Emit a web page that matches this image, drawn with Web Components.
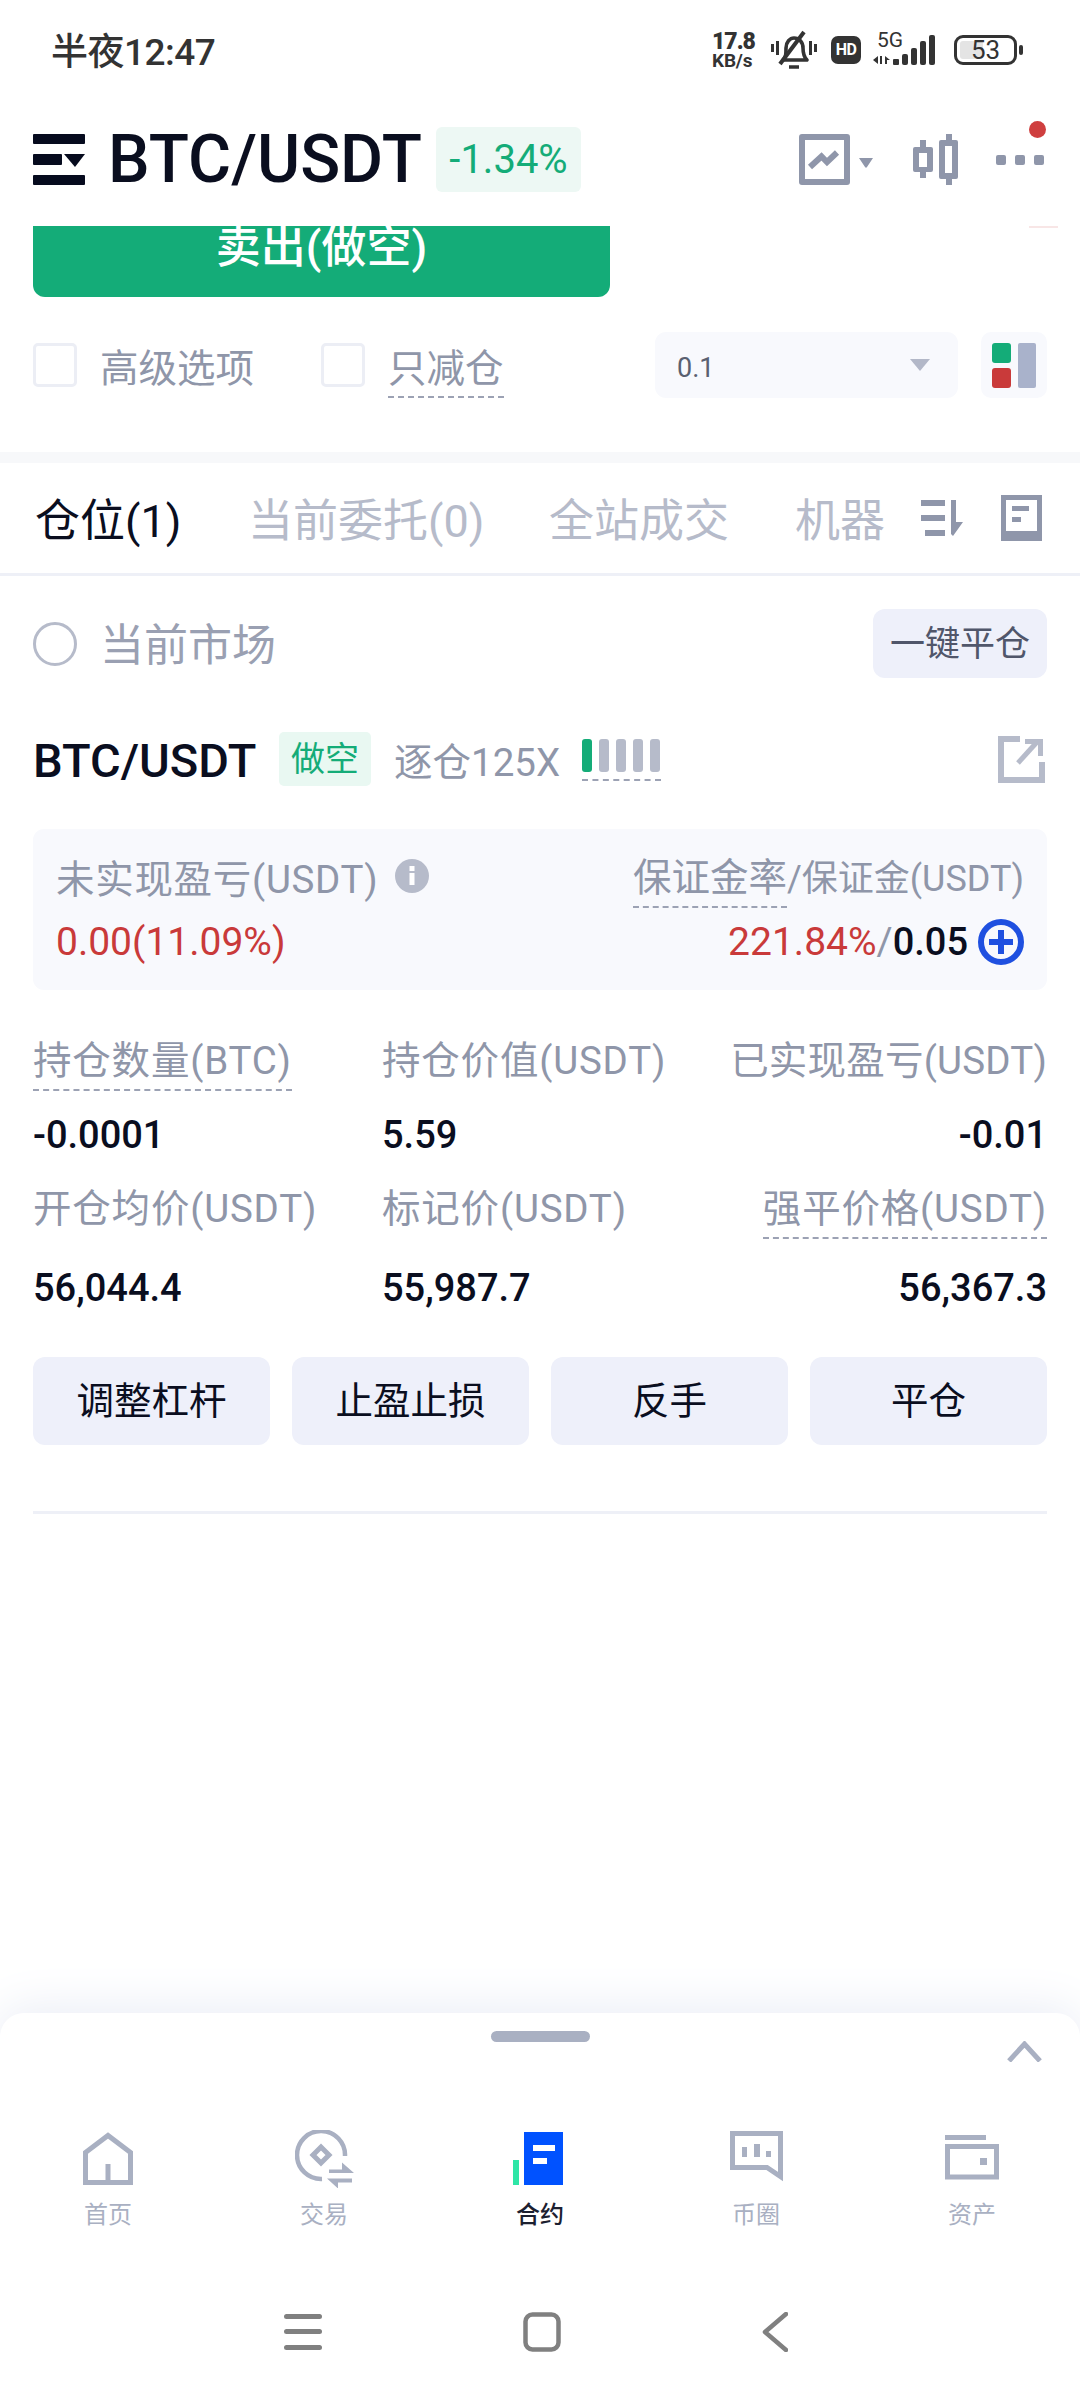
<!doctype html>
<html lang="zh">
<head>
<meta charset="utf-8">
<title>BTC/USDT</title>
<style>
  html, body { margin: 0; padding: 0; background: #fff; }
  body {
    width: 1080px; height: 2400px; overflow: hidden;
    font-family: Roboto, "Noto Sans CJK SC", sans-serif;
    display: flex; flex-direction: column;
  }
  main-scroll { flex: 1; }
</style>
</head>
<body>
<status-bar></status-bar>
<market-header></market-header>
<main-scroll>
  <order-panel></order-panel>
  <position-tabs></position-tabs>
  <position-filter></position-filter>
  <position-card></position-card>
</main-scroll>
<bottom-nav></bottom-nav>
<system-nav></system-nav>

<script>
// Small base class: every element only supplies its own css and markup.
class Bloco extends HTMLElement {
  constructor() {
    super();
    this.attachShadow({ mode: "open" });
  }
  connectedCallback() {
    this.shadowRoot.innerHTML = `<style>${this.estilo()}</style>${this.marcacao()}`;
  }
  estilo() { return ":host{display:block}"; }
  marcacao() { return "<slot></slot>"; }
}

class StatusBar extends Bloco {
  estilo() {
    return `
      :host { display: flex; align-items: center; height: 100px; padding: 0 57px 0 51px; color: #333; box-sizing: border-box; }
      .hora { font-size: 37px; font-weight: 500; letter-spacing: -0.5px; margin-top: -2px; }
      .dir { margin-left: auto; display: flex; align-items: center; height: 50px; }
      .rede { font-size: 19px; line-height: 17px; font-weight: 700; width: 59px; letter-spacing: -0.2px; }
      .rede b { display: block; font-size: 23px; line-height: 20px; letter-spacing: -1px; }
      .hd { width: 30px; height: 28px; background: #333; color: #fff; border-radius: 7px; font: 700 16px/28px Roboto, sans-serif;
            text-align: center; margin: 0 12px 0 14px; letter-spacing: -0.5px; }
      .sinal { width: 68px; height: 36px; position: relative; }
      .sinal span { position: absolute; left: 4px; top: -3px; font-size: 21px; line-height: 22px; }
      .sinal svg { position: absolute; left: 0; top: 0; }
      .bat { margin-left: 13px; width: 63px; height: 30px; border: 3px solid #333; border-radius: 9px; box-sizing: border-box;
             position: relative; font-size: 26px; line-height: 24px; text-align: center; }
      .bat i { position: absolute; left: 3px; top: 3px; bottom: 3px; width: 23px; background: #e4e4e4; border-radius: 3px; }
      .bat span { position: relative; }
      .nub { width: 4px; height: 10px; background: #333; margin-left: 2px; border-radius: 2px; }
    `;
  }
  marcacao() {
    return `
      <div class="hora">半夜12:47</div>
      <div class="dir">
        <div class="rede"><b>17.8</b>KB/s</div>
        <svg width="46" height="42" viewBox="0 0 46 42" fill="none" stroke="#333" stroke-width="3.6">
          <path d="M12 31c3-3 3-6 3-12 0-6 4-10 8-10 5 0 9 4 9 10 0 6 1 9 4 12z" stroke-linejoin="round"/>
          <path d="M33 3 9 35" stroke-width="4"/>
          <path d="M1.500 15v8M6.500 12v14M39.500 12v14M44.500 15v8" stroke-width="3"/>
          <path d="M18 38h10" stroke-width="3.500"/>
        </svg>
        <div class="hd">HD</div>
        <div class="sinal">
          <span>5G</span>
          <svg width="68" height="36" viewBox="0 0 68 36" fill="#333">
            <path d="M0 28l5-4v8zM7 24h2v8H7zM12 24l5 4h-3v4h-2z"/>
            <rect x="20" y="27" width="6" height="6" rx="1"/>
            <rect x="29" y="22" width="6" height="11" rx="2"/>
            <rect x="38" y="16" width="6" height="17" rx="2"/>
            <rect x="47" y="9" width="6" height="24" rx="2"/>
            <rect x="56" y="3" width="6" height="30" rx="2"/>
          </svg>
        </div>
        <div class="bat"><i></i><span>53</span></div>
        <div class="nub"></div>
      </div>
    `;
  }
}

class MarketHeader extends Bloco {
  estilo() {
    return `
      :host { display: flex; align-items: center; height: 126px; padding: 0 35px 7px 33px; box-sizing: border-box; }
      .logo { display: block; }
      h1 { margin: 0 0 0 23px; width: 328px; font-size: 66px; font-weight: 500; color: #0a0e1f; line-height: 70px; white-space: nowrap; }
      .var { width: 145px; height: 65px; background: #edf8f4; border-radius: 6px; color: #14ac78;
             font-size: 40px; line-height: 65px; text-align: center; }
      .acoes { margin-left: auto; display: flex; align-items: center; position: relative; height: 52px; }
      .ponto { position: absolute; right: -1px; top: -13px; width: 17px; height: 17px; border-radius: 50%; background: #cf3f3f; }
    `;
  }
  marcacao() {
    return `
      <svg class="logo" width="52" height="52" viewBox="0 0 52 52" fill="#060b1e">
        <rect width="52" height="10" rx="1"/>
        <rect y="20" width="29" height="11" rx="1"/>
        <path d="M31 20h21L42 33z"/>
        <rect y="41" width="52" height="10" rx="1"/>
      </svg>
      <h1>BTC/USDT</h1>
      <div class="var">-1.34%</div>
      <div class="acoes">
        <svg width="75" height="52" viewBox="0 0 75 52" fill="#8f96aa">
          <path d="M3 0h45a3 3 0 0 1 3 3v45a3 3 0 0 1-3 3H3a3 3 0 0 1-3-3V3a3 3 0 0 1 3-3zM6 6v39h39V6z" fill-rule="evenodd"/>
          <path d="M11 33 22.500 22.500 28 28l10-9.500" fill="none" stroke="#8f96aa" stroke-width="6"/>
          <path d="M60 24h14l-6 9a1.200 1.200 0 0 1-2 0z"/>
        </svg>
        <svg style="margin-left:38px" width="46" height="52" viewBox="0 0 46 52" fill="#8f96aa">
          <path d="M8 6h6v7h5a2 2 0 0 1 2 2v21a2 2 0 0 1-2 2h-5v6H8v-6H3a2 2 0 0 1-2-2V15a2 2 0 0 1 2-2h5zM7 19v14h8V19z" fill-rule="evenodd"/>
          <path d="M34 0h6v6h4a2 2 0 0 1 2 2v35a2 2 0 0 1-2 2h-4v6h-6v-6h-5a2 2 0 0 1-2-2V8a2 2 0 0 1 2-2h5zM33 12v27h7V12z" fill-rule="evenodd"/>
        </svg>
        <svg style="margin-left:38px" width="49" height="10" viewBox="0 0 49 10" fill="#8f96aa">
          <rect width="10" height="10" rx="2"/><rect x="19" width="10" height="10" rx="2"/><rect x="38" width="10" height="10" rx="2"/>
        </svg>
        <div class="ponto"></div>
      </div>
    `;
  }
}

class OrderPanel extends Bloco {
  estilo() {
    return `
      :host { display: block; height: 227px; box-sizing: border-box; color: #8f96a9; }
      .topo { display: flex; justify-content: space-between; padding: 0 22px 0 33px; height: 71px; }
      .vender { width: 577px; height: 71px; background: #14ac78; border-radius: 0 0 12px 12px; overflow: hidden; color: #fff;
                text-align: center; font-size: 45px; font-weight: 500; line-height: 44px; }
      .risco { width: 29px; height: 2px; background: #f8e6e6; }
      .opcoes { display: flex; align-items: center; margin-top: 35px; padding: 0 33px; height: 66px; font-size: 38.500px; }
      .caixa { width: 44px; height: 44px; box-sizing: border-box; border: 3px solid #eceef5; border-radius: 5px; margin-right: 23px; }
      .traco { border-bottom: 2px dashed #9ca2b4; line-height: 54px; margin-top: 10px; }
      .sel { margin-left: auto; width: 303px; height: 66px; background: #f8f9fd; border-radius: 11px; display: flex; align-items: center;
             padding: 6px 28px 0 22px; box-sizing: border-box; color: #5a6070; font-size: 27px; justify-content: space-between; }
      .sel i { border: 10px solid transparent; border-top: 12px solid #b3b8c8; border-bottom: 0; margin-top: -6px; }
      .mapa { margin-left: 23px; }
    `;
  }
  marcacao() {
    return `
      <div class="topo">
        <div class="vender">卖出(做空)</div>
        <div class="risco"></div>
      </div>
      <div class="opcoes">
        <div class="caixa"></div><span style="margin-right:67px">高级选项</span>
        <div class="caixa"></div><span class="traco">只减仓</span>
        <div class="sel"><span>0.1</span><i></i></div>
        <svg class="mapa" width="66" height="66" viewBox="0 0 66 66">
          <rect width="66" height="66" rx="10" fill="#f8f9fd"/>
          <rect x="11" y="11" width="19" height="20" rx="3" fill="#14ac78"/>
          <rect x="11" y="36" width="19" height="20" rx="3" fill="#c93a3a"/>
          <rect x="37" y="11" width="18" height="45" rx="2" fill="#a9b2cb"/>
        </svg>
      </div>
    `;
  }
}

class PositionTabs extends Bloco {
  estilo() {
    return `
      :host { display: block; border-top: 11px solid #f7f8fa; border-bottom: 3px solid #eef0f7; margin-top: -1px; }
      .linha { display: flex; align-items: center; height: 110px; padding: 0 38px 0 35px; font-size: 45px; color: #b6bbca; white-space: nowrap; }
      .linha span { margin-top: -2px; flex: none; }
      .linha .ativo { color: #0a0e1f; }
      .ic { margin-left: auto; display: flex; align-items: center; gap: 38px; }
    `;
  }
  marcacao() {
    return `
      <div class="linha">
        <span class="ativo" style="width:213px">仓位(1)</span>
        <span style="width:301px">当前委托(0)</span>
        <span style="width:246px">全站成交</span>
        <span>机器</span>
        <div class="ic">
          <svg width="42" height="36" viewBox="0 0 42 36" fill="#8f96aa">
            <rect y="0" width="24" height="6"/><rect y="15" width="24" height="6"/><rect x="4" y="30" width="20" height="6"/>
            <path d="M30 0h5v22h7L32 36l-2-2z"/>
          </svg>
          <svg width="41" height="46" viewBox="0 0 41 46" fill="#8f96aa">
            <path d="M0 0h41v46H0zM5 5v31h31V5z" fill-rule="evenodd"/>
            <rect x="11" y="11" width="17" height="5"/><rect x="11" y="22" width="9" height="5"/>
          </svg>
        </div>
      </div>
    `;
  }
}

class PositionFilter extends Bloco {
  estilo() {
    return `
      :host { display: flex; align-items: center; padding: 33px 33px 0; }
      .radio { width: 44px; height: 44px; box-sizing: border-box; border: 3px solid #b6bbca; border-radius: 50%; margin-right: 23px; }
      .txt { font-size: 44px; color: #9aa0b2; margin-top: -3px; }
      .btn { margin-left: auto; width: 174px; height: 69px; background: #eef0fa; border-radius: 12px; color: #50566a; font-size: 35px;
             line-height: 71px; text-align: center; }
    `;
  }
  marcacao() {
    return `<div class="radio"></div><div class="txt">当前市场</div><div class="btn">一键平仓</div>`;
  }
}

class PositionStat extends Bloco {
  estilo() {
    return `
      :host { display: block; }
      :host([fim]) { text-align: right; }
      .rot { color: #8f96a9; font-size: 38.500px; line-height: 46px; height: 52px; white-space: nowrap; letter-spacing: var(--ls, 0.8px); }
      :host([traco]) .rot span { border-bottom: 2px dashed #9ca2b4; display: inline-block; height: 51px; }
      .val { color: #0a0e1f; font-size: 38px; line-height: 46px; font-weight: 500; margin-top: var(--gap, 30px); }
    `;
  }
  marcacao() {
    return `<div class="rot"><span>${this.getAttribute("rotulo")}</span></div><div class="val">${this.getAttribute("valor")}</div>`;
  }
}

class PositionCard extends Bloco {
  estilo() {
    return `
      :host { display: block; padding: 54px 33px 0; }
      .cab { display: flex; align-items: center; height: 54px; }
      .par { font-size: 47px; font-weight: 500; color: #0a0e1f; width: 246px; white-space: nowrap; margin-top: 3px; }
      .lado { width: 92px; height: 54px; background: #e9f8f2; border-radius: 5px; color: #14ac78; font-size: 34px; line-height: 54px; text-align: center; }
      .marg { margin-left: 23px; font-size: 38.500px; color: #8f96a9; width: 188px; white-space: nowrap; }
      .barras { display: flex; gap: 7px; height: 40px; border-bottom: 2px dashed #9ca2b4; width: 79px; align-items: flex-start; align-self: flex-start; margin-top: 7px; }
      .barras i { width: 10px; height: 33px; background: #b6bbca; border-radius: 3px; }
      .barras i:first-child { background: #14ac78; }
      .sair { margin-left: auto; margin-right: 2px; }
      .resumo { margin-top: 43px; height: 161px; background: #f8f9fd; border-radius: 11px; padding: 24px 23px 0; box-sizing: border-box; }
      .lin { display: flex; justify-content: space-between; align-items: center; }
      .lin.um { height: 46px; color: #8f96a9; font-size: 38.500px; }
      .lin.dois { height: 62px; margin-top: 12px; font-size: 39px; color: #c93a3a; }
      .tit { display: flex; align-items: center; gap: 17px; letter-spacing: 0.7px; }
      .taxa { margin-top: 4px; white-space: nowrap; }
      .u { border-bottom: 2px dashed #9ca2b4; height: 51px; display: inline-block; line-height: 46px; }
      .s { font-size: 36px; }
      .dir { display: flex; align-items: center; }
      .preto { color: #0a0e1f; font-weight: 500; font-size: 38px; }
      .cinza { color: #8f96a9; }
      .grade { display: grid; grid-template-columns: 349px 1fr auto; margin-top: 48px; row-gap: 28px; }
      .acoes { display: grid; grid-template-columns: repeat(4, 1fr); gap: 22px; margin-top: 46px; }
      .acoes div { height: 88px; background: #eef0fa; border-radius: 12px; text-align: center; line-height: 88px; font-size: 37.500px; color: #0a0e1f; }
      hr { border: 0; height: 3px; background: #eef0f7; margin: 66px 0 0; }
    `;
  }
  marcacao() {
    return `
      <div class="cab">
        <div class="par">BTC/USDT</div>
        <div class="lado">做空</div>
        <div class="marg">逐仓125X</div>
        <div class="barras"><i></i><i></i><i></i><i></i><i></i></div>
        <svg class="sair" width="47" height="47" viewBox="0 0 47 47" fill="none" stroke="#b6bbca" stroke-width="6">
          <path d="M22 3H3v41h41V26"/>
          <path d="M20 27 39 6" stroke-width="5"/>
          <path d="M27 3h18v17h-5V8H27z" fill="#b6bbca" stroke="none"/>
        </svg>
      </div>
      <div class="resumo">
        <div class="lin um">
          <div class="tit">未实现盈亏(USDT)
            <svg width="34" height="34" viewBox="0 0 34 34"><circle cx="17" cy="17" r="17" fill="#b6bbca"/><rect x="14.500" y="14" width="5" height="12" fill="#fff"/><rect x="14.500" y="7" width="5" height="5" fill="#fff"/></svg>
          </div>
          <div class="taxa"><span class="u">保证金率</span><span class="s">/保证金(USDT)</span></div>
        </div>
        <div class="lin dois">
          <div>0.00(11.09%)</div>
          <div class="dir">221.84%<span class="cinza">/</span><span class="preto">0.05</span>
            <svg style="margin-left:10px" width="46" height="46" viewBox="0 0 46 46" fill="none" stroke="#1f50e0" stroke-width="6"><circle cx="23" cy="23" r="20"/><path d="M11 23h24M23 11v24"/></svg>
          </div>
        </div>
      </div>
      <div class="grade">
        <position-stat style="--gap:22px" traco rotulo="持仓数量(BTC)" valor="-0.0001"></position-stat>
        <position-stat style="--gap:22px" rotulo="持仓价值(USDT)" valor="5.59"></position-stat>
        <position-stat style="--gap:22px;--ls:0.2px" fim rotulo="已实现盈亏(USDT)" valor="-0.01"></position-stat>
        <position-stat style="--gap:27px" rotulo="开仓均价(USDT)" valor="56,044.4"></position-stat>
        <position-stat style="--gap:27px" rotulo="标记价(USDT)" valor="55,987.7"></position-stat>
        <position-stat style="--gap:27px" traco fim rotulo="强平价格(USDT)" valor="56,367.3"></position-stat>
      </div>
      <div class="acoes"><div>调整杠杆</div><div>止盈止损</div><div>反手</div><div>平仓</div></div>
      <hr>
    `;
  }
}

class NavItem extends Bloco {
  estilo() {
    return `
      :host { display: flex; flex-direction: column; align-items: center; flex: 1; color: #a9b0c2; font-size: 24px; }
      :host([ativo]) { color: #1c2030; font-weight: 500; }
      .ic { height: 62px; display: flex; align-items: flex-end; }
      .txt { line-height: 30px; margin-top: 12px; }
    `;
  }
  marcacao() {
    return `<div class="ic"><slot></slot></div><div class="txt">${this.getAttribute("rotulo")}</div>`;
  }
}

class BottomNav extends Bloco {
  estilo() {
    return `
      :host { display: block; height: 290px; box-sizing: border-box; padding-top: 13px; }
      .folha { height: 277px; background: #fff; border-radius: 24px 24px 0 0; position: relative; box-shadow: 0 -4px 50px #e9ecf5; clip-path: inset(-60px 0 0 0); }
      .alca { width: 99px; height: 11px; border-radius: 6px; background: #a9b0c2; margin: 0 auto; position: relative; top: 18px; }
      .seta { position: absolute; right: 38px; top: 28px; }
      .itens { display: flex; position: absolute; left: 0; right: 0; top: 113px; }
    `;
  }
  marcacao() {
    return `
      <div class="folha">
        <div class="alca"></div>
        <svg class="seta" width="35" height="21" viewBox="0 0 35 21" fill="none" stroke="#a9b0c2" stroke-width="5"><path d="M2 20 17.500 3 33 20"/></svg>
        <div class="itens">
          <nav-item rotulo="首页">
            <svg style="margin-bottom:3px" width="50" height="53" viewBox="0 0 50 53" fill="none" stroke="#a9b0c2" stroke-width="5">
              <path d="M2.500 50.500V20.500L25 3.500l22.500 17v30zM25 50V32"/>
            </svg>
          </nav-item>
          <nav-item rotulo="交易">
            <svg width="59" height="58" viewBox="0 0 59 58" fill="none" stroke="#a9b0c2" stroke-width="4.500">
              <path d="M50 26A24 24 0 1 0 27 49"/>
              <path d="M26 17l8 8-8 8-8-8z" stroke-width="5"/>
              <path d="M34 39.500h13v-7l12 10.500H34zM32 48.500h25v4H43v6z" fill="#a9b0c2" stroke="none"/>
            </svg>
          </nav-item>
          <nav-item ativo rotulo="合约">
            <svg style="margin:0 5px 3px 0" width="50" height="53" viewBox="0 0 50 53">
              <rect x="0" y="28" width="6" height="25" fill="#2ee6a6"/>
              <rect x="11" y="0" width="39" height="53" fill="#0052ff"/>
              <rect x="20" y="13" width="22" height="6" fill="#fff"/>
              <rect x="20" y="26" width="14" height="6" fill="#fff"/>
            </svg>
          </nav-item>
          <nav-item rotulo="币圈">
            <svg style="margin-bottom:6px" width="53" height="51" viewBox="0 0 53 51" fill="none" stroke="#a9b0c2" stroke-width="5">
              <path d="M2.500 2.500h48v43L37 36.500H2.500z"/>
              <g fill="#a9b0c2" stroke="none"><rect x="12" y="16" width="5" height="10"/><rect x="24" y="13" width="6" height="13"/><rect x="36" y="20" width="5" height="6"/></g>
            </svg>
          </nav-item>
          <nav-item rotulo="资产">
            <svg style="margin-bottom:8px" width="54" height="46" viewBox="0 0 54 46" fill="none" stroke="#a9b0c2" stroke-width="5">
              <rect x="0" y="1" width="41" height="5" fill="#a9b0c2" stroke="none"/>
              <rect x="2.500" y="12.500" width="49" height="30.500"/>
              <rect x="35" y="24" width="7" height="7" fill="#a9b0c2" stroke="none"/>
            </svg>
          </nav-item>
        </div>
      </div>
    `;
  }
}

class SystemNav extends Bloco {
  estilo() {
    return `
      :host { display: flex; height: 110px; box-sizing: border-box; padding: 22px 292px 0 284px; justify-content: space-between; background: #fff; position: relative; }
    `;
  }
  marcacao() {
    return `
      <svg width="38" height="40" viewBox="0 0 38 40" fill="#808080">
        <rect y="2" width="38" height="5" rx="2.500"/><rect y="17" width="38" height="5" rx="2.500"/><rect y="33" width="38" height="5" rx="2.500"/>
      </svg>
      <svg width="38" height="40" viewBox="0 0 38 40" fill="none" stroke="#808080" stroke-width="4.500">
        <rect x="2.500" y="2.500" width="33" height="35" rx="7"/>
      </svg>
      <svg width="26" height="40" viewBox="0 0 26 40" fill="none" stroke="#808080" stroke-width="4.500" stroke-linecap="round" stroke-linejoin="round">
        <path d="M24 2 3 20l21 18"/>
      </svg>
    `;
  }
}

customElements.define("status-bar", StatusBar);
customElements.define("market-header", MarketHeader);
customElements.define("order-panel", OrderPanel);
customElements.define("position-tabs", PositionTabs);
customElements.define("position-filter", PositionFilter);
customElements.define("position-stat", PositionStat);
customElements.define("position-card", PositionCard);
customElements.define("nav-item", NavItem);
customElements.define("bottom-nav", BottomNav);
customElements.define("system-nav", SystemNav);
</script>
</body>
</html>
